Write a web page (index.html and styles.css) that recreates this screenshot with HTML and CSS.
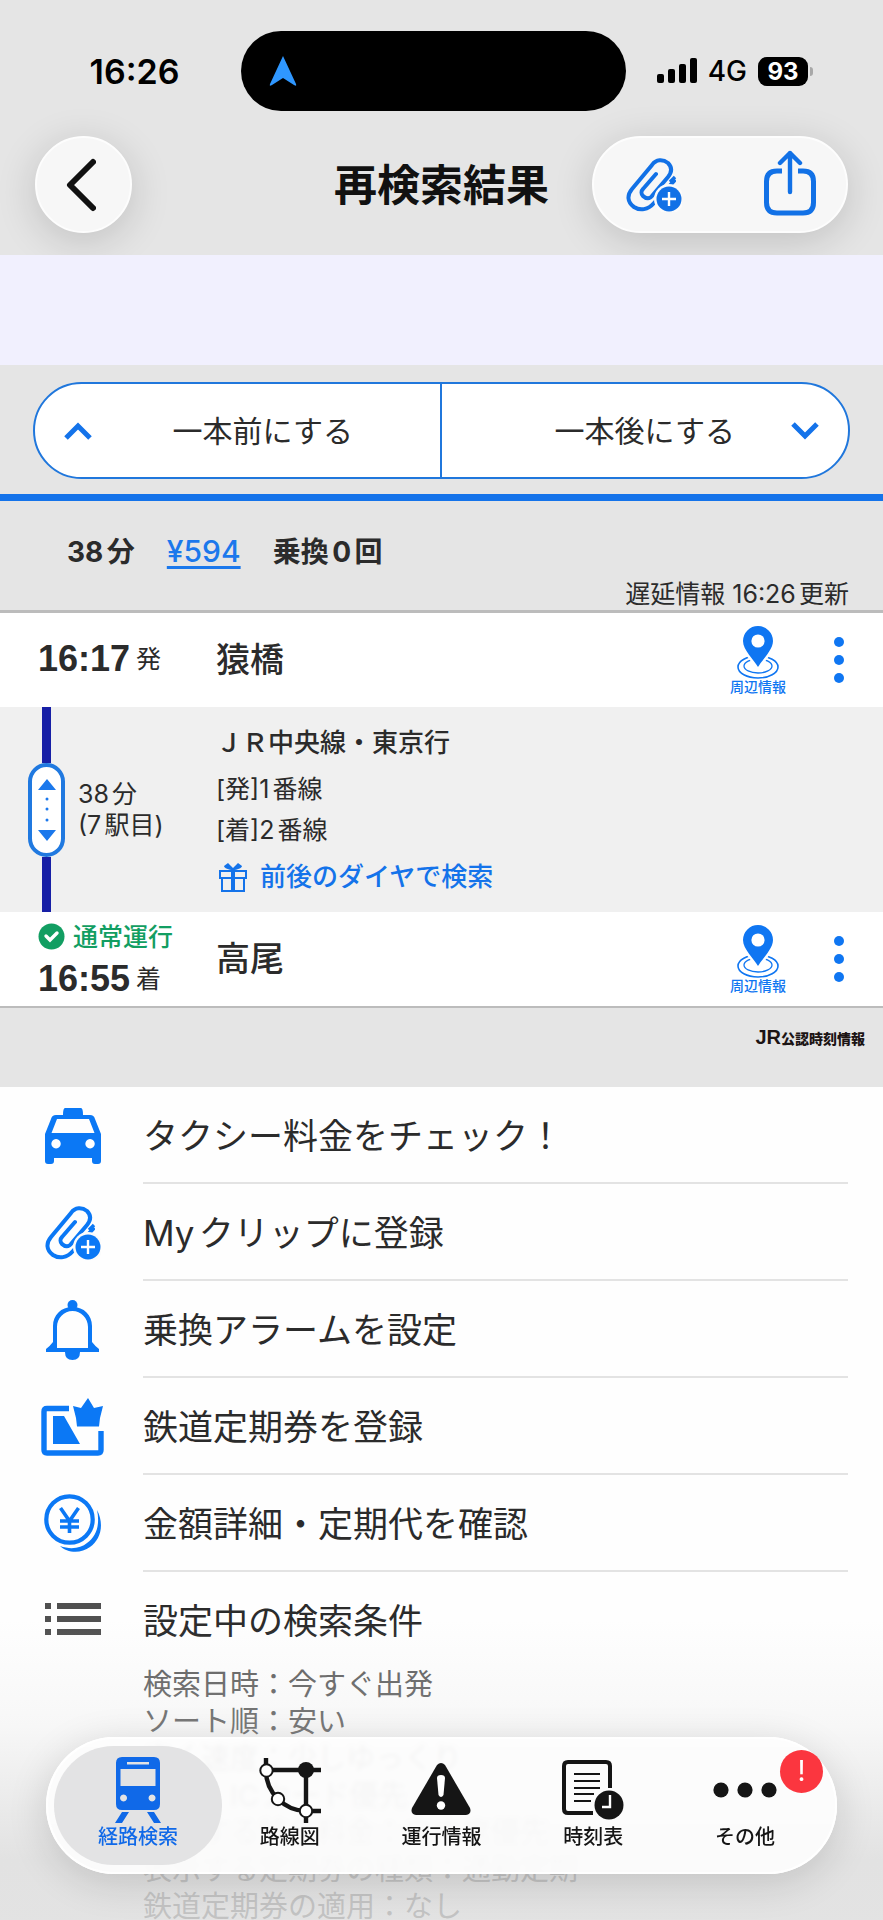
FILE: index.html
```html
<!DOCTYPE html>
<html lang="ja">
<head>
<meta charset="utf-8">
<meta name="viewport" content="width=device-width, initial-scale=1">
<title>再検索結果</title>
<link rel="stylesheet" href="styles.css">
</head>
<body>
<svg class="defs" aria-hidden="true">
  <symbol id="clip" viewBox="0 0 56 54">
    <path d="M48 23 28 45C22 52 14 53 8 49 1 44 1 37 6 31L26 7C30 1 37 1 42 5 46 9 46 14 42 19L26 38C24 41 20 41 17 38 15 36 15 33 17 31L30 16" fill="none" stroke="currentColor" stroke-width="4" stroke-linecap="round"/>
    <circle cx="43" cy="41" r="15" fill="#fbfbfb"/>
    <circle cx="43" cy="41" r="12.5" fill="currentColor"/>
    <path d="M43 34v14M36 41h14" stroke="#fff" stroke-width="2.4"/>
    <path d="m44 24 5-5" stroke="currentColor" stroke-width="3.4"/>
  </symbol>
  <symbol id="pin" viewBox="0 0 42 53">
    <ellipse cx="21" cy="41" rx="20" ry="11" fill="none" stroke="currentColor" stroke-width="1.6"/>
    <ellipse cx="21" cy="40" rx="14" ry="7" fill="none" stroke="currentColor" stroke-width="1.3"/>
    <path d="M21 41C17 34 6 24 6 15a15 15 0 0 1 30 0c0 9-11 19-15 26Z" fill="currentColor" stroke="#fff" stroke-width="5" paint-order="stroke"/>
    <circle cx="21" cy="15" r="6.6" fill="#fff"/>
  </symbol>
  <symbol id="dots" viewBox="0 0 12 48">
    <circle cx="6" cy="6" r="5"/><circle cx="6" cy="24" r="5"/><circle cx="6" cy="42" r="5"/>
  </symbol>
</svg>

<main class="screen">
  <header class="top">
    <div class="status">
      <span class="clock">16:26</span>
      <span class="island">
        <svg width="28" height="32" viewBox="0 0 28 32" aria-hidden="true"><path d="M14 1 27 29Q28 32 25 30L14 23 3 30Q0 32 1 29Z" fill="#2f97ff"/></svg>
      </span>
      <span class="signals">
        <svg width="40" height="26" viewBox="0 0 40 26" aria-hidden="true"><rect y="16" width="7" height="9" rx="2"/><rect x="11" y="11" width="7" height="14" rx="2"/><rect x="22" y="6" width="7" height="19" rx="2"/><rect x="33" width="7" height="25" rx="2"/></svg>
        <span class="network">4G</span>
        <span class="battery">93</span>
      </span>
    </div>
    <div class="nav">
      <button class="back" aria-label="戻る">
        <svg width="30" height="54" viewBox="0 0 30 54" aria-hidden="true"><path d="M27 4 4 27l23 23" fill="none" stroke="#111" stroke-width="6" stroke-linecap="round" stroke-linejoin="round"/></svg>
      </button>
      <h1 class="title">再検索結果</h1>
      <div class="actions">
        <button class="action" aria-label="Myクリップに登録"><svg width="56" height="54"><use href="#clip"/></svg></button>
        <button class="action share" aria-label="共有">
          <svg width="52" height="66" viewBox="0 0 52 66" aria-hidden="true"><g fill="none" stroke="currentColor" stroke-width="5"><path d="M18 21h-5q-10.500 0-10.500 10.500v21q0 10.500 10.500 10.500h26q10.500 0 10.500-10.500v-21q0-10.500-10.500-10.500h-5"/><path d="M26 42V3M16 13 26 3l10 10" stroke-linecap="round" stroke-linejoin="round" stroke-width="4.400"/></g></svg>
        </button>
      </div>
    </div>
  </header>

  <div class="ad"></div>

  <div class="shift">
    <div class="shift-pair">
      <button class="shift-button earlier">
        <svg width="28" height="18" viewBox="0 0 28 18" aria-hidden="true"><path d="M2 16 14 4l12 12"/></svg>
        <span>一本前にする</span>
      </button>
      <button class="shift-button later">
        <span>一本後にする</span>
        <svg width="28" height="18" viewBox="0 0 28 18" aria-hidden="true"><path d="m2 2 12 12L26 2"/></svg>
      </button>
    </div>
  </div>

  <section class="summary">
    <div class="facts"><span>38分</span><a class="fare" href="#fare">¥594</a><span>乗換0回</span></div>
    <p class="updated">遅延情報 16:26更新</p>
  </section>

  <section class="route">
    <div class="station">
      <div class="when"><p class="time"><b>16:17</b>発</p></div>
      <h2 class="name">猿橋</h2>
      <button class="around"><svg width="42" height="53"><use href="#pin"/></svg>周辺情報</button>
      <button class="more" aria-label="メニュー"><svg width="12" height="48"><use href="#dots"/></svg></button>
    </div>
    <div class="leg">
      <div class="ride">
        <div class="rail">
          <button class="stops" aria-label="途中駅を表示">
            <svg width="18" height="62" viewBox="0 0 18 62" aria-hidden="true"><path d="M9 0 18 11H0ZM9 62 0 51h18Z"/><circle cx="9" cy="20" r="1.500"/><circle cx="9" cy="30" r="1.500"/><circle cx="9" cy="41" r="1.500"/></svg>
          </button>
        </div>
        <p class="duration">38分<br>(7駅目)</p>
      </div>
      <div class="train">
        <h3 class="line">ＪＲ中央線・東京行</h3>
        <p class="platform">[発]1番線</p>
        <p class="platform">[着]2番線</p>
        <a class="diagram" href="#diagram">
          <svg width="30" height="31" viewBox="0 0 30 31" aria-hidden="true"><path d="M2 9h26v7H2zM4 16h22v13H4z" fill="none" stroke="currentColor" stroke-width="2"/><path d="M13 9h4v20h-4zM15 8C11 8 6 6 6 4l4-3 5 5 5-5 4 3c0 2-5 4-9 4Z" fill="currentColor"/></svg>
          前後のダイヤで検索
        </a>
      </div>
    </div>
    <div class="station">
      <div class="when">
        <p class="normal"><svg width="27" height="27" viewBox="0 0 27 27" aria-hidden="true"><circle cx="13.500" cy="13.500" r="13" fill="#129e62"/><path d="m8 13 4 4 7-7" fill="none" stroke="#fff" stroke-width="3.400" stroke-linecap="round"/></svg>通常運行</p>
        <p class="time"><b>16:55</b>着</p>
      </div>
      <h2 class="name">高尾</h2>
      <button class="around"><svg width="42" height="53"><use href="#pin"/></svg>周辺情報</button>
      <button class="more" aria-label="メニュー"><svg width="12" height="48"><use href="#dots"/></svg></button>
    </div>
  </section>

  <p class="credit"><b>JR</b>公認時刻情報</p>

  <ul class="menu">
    <li><a class="item" href="#taxi">
      <span class="icon"><svg width="56" height="56" viewBox="0 0 56 56" aria-hidden="true"><path fill="currentColor" fill-rule="evenodd" d="M20 0h16q2 0 2 7h7q4 0 5 4l6 15v27q0 3-3 3h-3q-3 0-3-3v-3H9v3q0 3-3 3H3q-3 0-3-3V26L6 11q1-4 5-4h7q0-7 2-7ZM12 11 6.500 25h43L44 11ZM11 31a4.700 4.700 0 1 0 .1 0ZM45 31a4.700 4.700 0 1 0 .1 0Z"/></svg></span>
      <span class="label">タクシー料金をチェック！</span></a></li>
    <li><a class="item" href="#clip-save">
      <span class="icon"><svg width="56" height="54" aria-hidden="true"><use href="#clip"/></svg></span>
      <span class="label">Myクリップに登録</span></a></li>
    <li><a class="item" href="#alarm">
      <span class="icon"><svg width="53" height="60" viewBox="0 0 53 60" aria-hidden="true"><circle cx="26.500" cy="5" r="5" fill="currentColor"/><path fill="currentColor" fill-rule="evenodd" d="M26.500 7C38 7 46 15 46 26v16q3 4 7 7v3H0v-3q4-3 7-7V26C7 15 15 7 26.500 7ZM26.500 11C18 11 11 18 11 27v21h31V27c0-9-7-16-15.500-16Z"/><path d="M19 52h15q0 8-7.500 8T19 52Z" fill="currentColor"/></svg></span>
      <span class="label">乗換アラームを設定</span></a></li>
    <li><a class="item" href="#pass">
      <span class="icon"><svg width="63" height="58" viewBox="0 0 63 58" aria-hidden="true"><path d="M28 10.500H6q-3 0-3 3V52q0 3 3 3h51q3 0 3-3V33" fill="none" stroke="currentColor" stroke-width="5.400"/><path d="m32 8 8 2 7-10 6 10 9-2-3 12-1 8.500H36L35 20ZM12 18h11l16 28H12Z" fill="currentColor"/></svg></span>
      <span class="label">鉄道定期券を登録</span></a></li>
    <li><a class="item" href="#price">
      <span class="icon"><svg width="58" height="59" viewBox="0 0 58 59" aria-hidden="true"><circle cx="25.500" cy="25.500" r="23.200" fill="none" stroke="currentColor" stroke-width="4.200"/><path d="M53 16C61 31 56 46 46 53 37 60 23 59 16 52 27 56 37 54 43 49 53 42 56 30 53 16Z" fill="currentColor"/><path d="m16.500 14 9 13 9-13M25.500 26v13M16 27h19M16 33h19" fill="none" stroke="currentColor" stroke-width="3.600"/></svg></span>
      <span class="label">金額詳細・定期代を確認</span></a></li>
    <li><div class="item conditions">
      <span class="icon"><svg width="56" height="32" viewBox="0 0 56 32" fill="#505050" aria-hidden="true"><path d="M0 0h6v6H0zM12 0h44v6H12zM0 13h6v6H0zM12 13h44v6H12zM0 26h6v6H0zM12 26h44v6H12z"/></svg></span>
      <span class="label">設定中の検索条件</span></div>
      <p class="detail">検索日時：今すぐ出発<br>ソート順：安い<br>歩く速度：少しゆっくり<br>運賃：ICカード優先<br>表示する特急料金：自由席優先<br>表示する定期券の種類：通勤定期<br>鉄道定期券の適用：なし</p></li>
  </ul>
</main>

<nav class="tabbar">
  <a class="tab current" href="#search">
    <span class="tab-icon"><svg width="46" height="67" viewBox="0 0 46 67" aria-hidden="true"><path fill="currentColor" fill-rule="evenodd" d="M7 0h32q6 0 6 6v41q0 6-6 6H7q-6 0-6-6V6q0-6 6-6ZM12 5v2.500h22V5ZM5.500 12v17h35V12ZM8.500 37.500a3.500 3.500 0 1 0 .1 0ZM37 37.500a3.500 3.500 0 1 0 .1 0Z"/><path d="M7 55h7L7 66H0ZM32 55h7l7 11h-7Z" fill="currentColor"/></svg></span>
    <span>経路検索</span>
  </a>
  <a class="tab" href="#map">
    <span class="tab-icon"><svg width="62" height="65" viewBox="0 0 62 65" aria-hidden="true"><path d="M7 0v13q0 16 12 28 12 12 28 12h15M7 12h55M47 12v53" fill="none" stroke="currentColor" stroke-width="4.400"/><g fill="#fff" stroke="currentColor" stroke-width="2"><circle cx="7.500" cy="12.500" r="6.200"/><circle cx="19" cy="41" r="6.200"/><circle cx="47" cy="53" r="6.200"/></g><circle cx="47" cy="12" r="8" fill="currentColor"/></svg></span>
    <span>路線図</span>
  </a>
  <a class="tab" href="#info">
    <span class="tab-icon low"><svg width="60" height="52" viewBox="0 0 60 52" aria-hidden="true"><path d="M26 2q4-4 8 0l25 43q2 6-4 7H5q-6-1-4-7Z" fill="currentColor"/><path d="M26 15q0-3 4-3t4 3l-1.500 17q-2.500 4-5 0Z" fill="#fff"/><circle cx="30" cy="42.500" r="4.200" fill="#fff"/></svg></span>
    <span>運行情報</span>
  </a>
  <a class="tab" href="#timetable">
    <span class="tab-icon"><svg width="62" height="60" viewBox="0 0 62 60" aria-hidden="true"><path d="M31 53H6q-4 0-4-4V6q0-4 4-4h38q4 0 4 4v22" fill="none" stroke="currentColor" stroke-width="4"/><path d="M12 14h26M12 21h26M12 28h26M12 34h20M12 41h17" stroke="currentColor" stroke-width="2.200"/><circle cx="47" cy="45" r="14.500" fill="currentColor"/><path d="M48 35v12h-8" fill="none" stroke="#fff" stroke-width="2.400"/></svg></span>
    <span>時刻表</span>
  </a>
  <a class="tab" href="#other">
    <span class="tab-icon"><svg width="64" height="16" viewBox="0 0 64 16" fill="currentColor" aria-hidden="true"><circle cx="8" cy="8" r="7.600"/><circle cx="32" cy="8" r="7.600"/><circle cx="56" cy="8" r="7.600"/></svg></span>
    <span>その他</span>
    <span class="badge">!</span>
  </a>
</nav>
</body>
</html>
```
FILE: styles.css
```css
* { box-sizing: border-box; }
body, h1, h2, h3, p, ul { margin: 0; padding: 0; }
body {
  font-family: Inter, "Noto Sans CJK JP", sans-serif;
  color: #2b2b2b;
  background: #fefefe;
  text-autospace: normal;
}
button { font: inherit; color: inherit; border: 0; padding: 0; background: none; }
a { color: inherit; text-decoration: none; }
svg { display: block; flex: none; }
.defs { position: absolute; width: 0; height: 0; }

.screen { position: relative; height: 100vh; overflow: hidden; }
.screen::after {
  content: "";
  position: absolute;
  inset: auto 0 0;
  height: 300px;
  background: linear-gradient(rgba(220, 220, 220, 0), rgba(220, 220, 220, .2) 35%, rgba(219, 219, 219, .8) 80%, rgba(220, 220, 220, .8));
}

/* header */
.top { background: #e5e5e5; padding: 31px 35px 22px; overflow: hidden; }
.status { display: grid; grid-template-columns: 241fr 385fr 257fr; align-items: center; height: 80px; color: #000; margin: 0 -35px; }
.clock { padding-left: 28px; text-align: center; font-size: 34px; font-weight: 600; }
.island { align-self: stretch; display: flex; align-items: center; padding-left: 28px; background: #000; border-radius: 40px; }
.signals { display: flex; align-items: center; justify-content: flex-end; gap: 11px; padding-right: 75px; }
.network { font-size: 28px; font-weight: 500; }
.battery {
  position: relative;
  width: 50px;
  border-radius: 9px;
  background: #000;
  color: #fff;
  text-align: center;
  font-size: 24px;
  line-height: 29px;
  font-weight: 700;
}
.battery::after { content: ""; position: absolute; right: -5px; top: 10px; width: 3px; height: 9px; border-radius: 0 3px 3px 0; background: #a8a8a8; }
.nav { display: grid; grid-template-columns: 1fr auto 1fr; align-items: center; margin-top: 25px; }
.back, .actions { height: 97px; border-radius: 49px; background: #f7f7f7; border: 2px solid #fdfdfd; box-shadow: 0 8px 40px rgba(0, 0, 0, .16); }
.back { width: 97px; display: flex; align-items: center; justify-content: center; padding-right: 6px; }
.title { font-size: 43px; font-weight: 700; line-height: 60px; color: #111; }
.actions { justify-self: end; display: flex; align-items: center; gap: 82px; padding: 0 30px 0 32px; color: #1271e6; }
.share { padding-bottom: 4px; }
.ad { height: 110px; background: #f1f0fe; }

/* earlier / later */
.shift { padding: 17px 33px 15px; background: #e5e5e5; border-bottom: 7px solid #1473ea; }
.shift-pair { display: grid; grid-template-columns: 1fr 1fr; height: 97px; border: 2px solid #2077dc; border-radius: 49px; background: #fff; }
.shift-button { display: grid; align-items: center; padding: 0 29px; font-size: 30px; text-align: center; }
.shift-button span { padding-bottom: 4px; }
.shift-button path { fill: none; stroke: #1473ea; stroke-width: 5; }
.earlier { grid-template-columns: 28px 1fr; padding-right: 6px; border-right: 2px solid #2077dc; }
.later { grid-template-columns: 1fr 28px; padding-left: 57px; }

.summary { background: #e5e5e5; border-bottom: 3px solid #bcbcbc; padding: 31px 34px 0 67px; }
.facts { display: flex; align-items: baseline; gap: 32px; font-size: 28px; line-height: 38px; font-weight: 700; }
.fare { color: #1b78ec; font-size: 30px; font-weight: 500; text-decoration: underline; text-decoration-thickness: 3px; text-underline-offset: 4px; text-decoration-skip-ink: none; }
.updated { margin-top: 7px; text-align: right; font-size: 25px; line-height: 32px; }

/* route */
.route { border-bottom: 2px solid #bcbcbc; }
.station { display: grid; grid-template-columns: 216px 1fr auto auto; align-items: center; min-height: 94px; padding-right: 38px; background: #fff; }
.when { padding: 0 0 3px 38px; }
.time { display: flex; align-items: center; gap: 6px; font-size: 25px; line-height: 42px; }
.time b { font-family: "Liberation Sans", sans-serif; font-size: 36px; }
.normal { display: flex; align-items: center; gap: 8px; font-size: 25px; line-height: 42px; font-weight: 500; color: #129e62; }
.name { font-size: 34px; font-weight: 500; line-height: 48px; }
.around { display: grid; justify-items: center; color: #0f76f2; font-size: 14px; line-height: 16px; font-weight: 500; }
.more { margin-left: 47px; fill: #0f76f2; }
.leg { display: grid; grid-template-columns: 216px 1fr; background: #f0f0f0; }
.ride { display: flex; align-items: center; gap: 13px; padding-left: 28px; }
.rail { align-self: stretch; display: flex; flex-direction: column; align-items: center; }
.rail::before, .rail::after { content: ""; flex: 1; width: 9px; background: #171fa6; }
.stops { display: flex; justify-content: center; width: 37px; padding: 12px 0; border: 4px solid #2079e0; border-radius: 19px; background: #fff; fill: #1b78ec; }
.duration { font-size: 25px; line-height: 31px; }
.train { padding: 16px 0 15px; }
.line { margin-bottom: 6px; font-size: 26px; line-height: 40px; font-weight: 500; }
.platform { font-size: 25px; line-height: 41px; }
.diagram { display: flex; align-items: center; gap: 12px; width: max-content; margin-top: 6px; padding-left: 2px; font-size: 26px; line-height: 40px; font-weight: 500; color: #1473ea; }

.credit { padding: 11px 18px 30px; background: #e5e5e5; text-align: right; font-size: 14px; line-height: 36px; font-weight: 900; color: #1c1414; text-autospace: no-autospace; }
.credit b { font-family: "Liberation Sans", sans-serif; font-size: 20px; }

/* menu */
.menu { list-style: none; }
.item { display: grid; grid-template-columns: 143px 1fr; align-items: center; }
.icon { display: flex; justify-content: center; padding-left: 2px; color: #0b78f5; }
.label { display: flex; align-items: center; min-height: 97px; margin-right: 35px; padding-bottom: 2px; border-bottom: 2px solid #e3e3e3; font-size: 35px; }
.conditions .label { min-height: 94px; border: 0; }
.detail { padding-left: 143px; font-size: 29px; line-height: 37px; color: #606060; }

/* tab bar */
.tabbar {
  position: fixed;
  inset: auto 46px 46px;
  display: grid;
  grid-template-columns: repeat(5, 1fr);
  padding: 19px 16px 24px;
  border-radius: 69px;
  background: rgba(253, 253, 253, .92);
  backdrop-filter: blur(2px);
  box-shadow: inset 0 0 0 2px #fff, 0 8px 40px rgba(0, 0, 0, .14);
}
.tab { position: relative; display: grid; justify-items: center; font-size: 20px; line-height: 26px; font-weight: 500; color: #151515; }
.tab > span { position: relative; }
.tab-icon { display: flex; align-items: center; height: 68px; }
.low { align-items: flex-end; padding-bottom: 9px; }
.current { color: #1069e8; }
.current::before { content: ""; position: absolute; inset: -10px -8px -15px; border-radius: 60px; background: #e3e3e4; }
.tab > .badge { position: absolute; top: -6px; right: -2px; width: 43px; border-radius: 50%; background: #fb363f; color: #fff; text-align: center; font-size: 28px; line-height: 43px; font-weight: 400; }
```
